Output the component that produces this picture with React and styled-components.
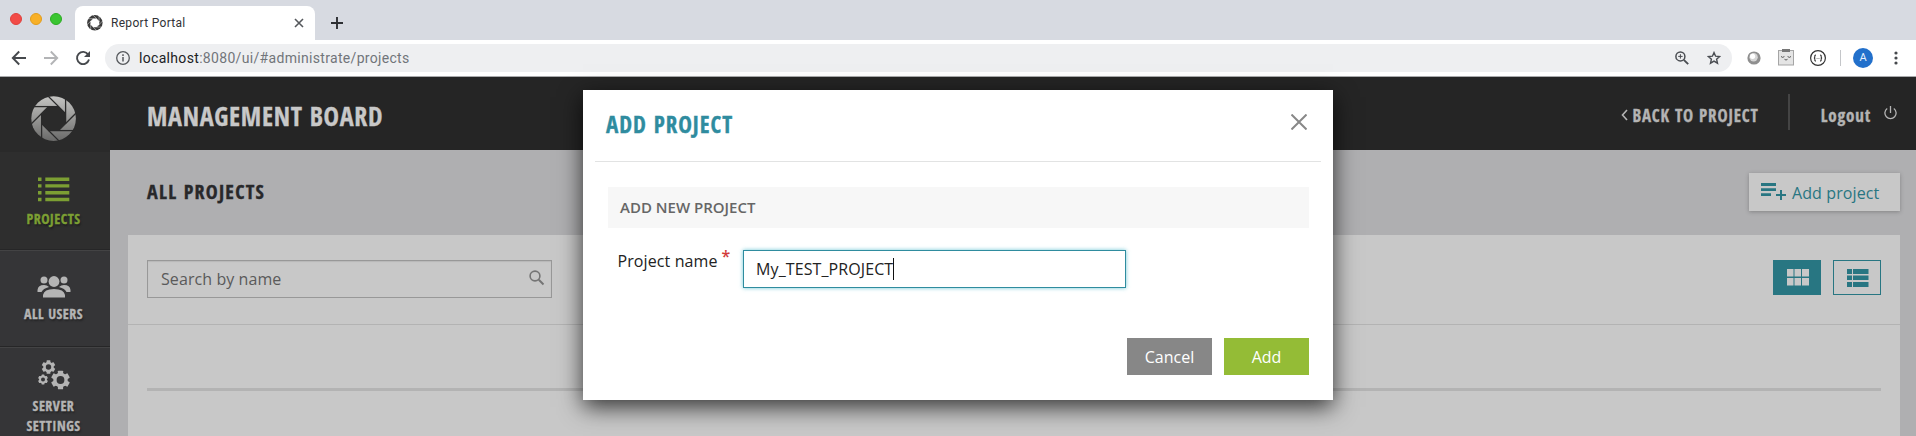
import React from 'react';
import styled, { createGlobalStyle } from 'styled-components';

const Global = createGlobalStyle`
  *, *::before, *::after { box-sizing: border-box; }
  body { margin: 0; overflow: hidden; background: #fff; font-family: "Open Sans", sans-serif; }
  button, input { font: inherit; }
`;

const Screen = styled.div`
  position: relative;
  display: flex;
  flex-direction: column;
  width: 1916px;
  height: 436px;
  overflow: hidden;
`;

const Condensed = styled.span`
  font-family: "Open Sans Condensed", "Open Sans", sans-serif;
  font-stretch: 75%;
  font-weight: 700;
  white-space: nowrap;
  font-size: ${(p) => p.$size}px;
  letter-spacing: ${(p) => p.$ls || 0}px;
  line-height: 1.36;
  -webkit-text-stroke: 0.35px currentColor;
`;

/* Browser chrome */
const TabStrip = styled.div`
  display: flex;
  height: 40px;
  background: #d7dae1;
`;
const Lights = styled.div`
  display: flex;
  gap: 8px;
  width: 75px;
  padding: 13px 0 0 10px;
`;
const Light = styled.i`
  width: 12px;
  height: 12px;
  border-radius: 50%;
  background: ${(p) => p.$fill};
  border: 1px solid ${(p) => p.$edge};
`;
const Tab = styled.div`
  display: flex;
  align-items: center;
  width: 240px;
  height: 34px;
  margin-top: 6px;
  padding: 0 11px 0 12px;
  background: #fff;
  border-radius: 8px 8px 0 0;
  font: 12px/16px Roboto, sans-serif;
  letter-spacing: 0.3px;
  color: #303236;
`;
const TabTitle = styled.span`
  flex: 1;
  margin-left: 8px;
`;
const NewTab = styled.svg`
  margin: 17px 0 0 16px;
`;
const Toolbar = styled.div`
  display: flex;
  align-items: center;
  height: 37px;
  padding: 0 16px 1px 11px;
  background: #fff;
  border-bottom: 1px solid #a9aaac;
`;
const NavIcons = styled.div`
  display: flex;
  gap: 16px;
  width: 94px;
`;
const Address = styled.div`
  display: flex;
  align-items: center;
  width: 1627px;
  height: 28px;
  padding: 0 11px 0 11px;
  border-radius: 14px;
  background: #eeeff1;
  font: 14px/20px Roboto, sans-serif;
  letter-spacing: 0.32px;
  color: #71757a;
`;
const Url = styled.span`
  flex: 1;
  margin-left: 9px;
  b { font-weight: 400; color: #202124; }
`;
const AddressIcons = styled.div`
  display: flex;
  gap: 18px;
`;
const Extensions = styled.div`
  display: flex;
  align-items: center;
  flex: 1;
  gap: 16px;
  padding-left: 15px;
`;
const Divider = styled.i`
  width: 1px;
  height: 16px;
  margin: 0 -4px 0 -2px;
  background: #c4c6c9;
`;
const Avatar = styled.span`
  width: 20px;
  height: 20px;
  margin-right: 5px;
  border-radius: 50%;
  background: #2270cb;
  color: #e8f0fb;
  font: 11px/20px Roboto, sans-serif;
  text-align: center;
`;

/* Application */
const Page = styled.div`
  display: flex;
  flex: 1;
  min-height: 0;
`;
const Sidebar = styled.nav`
  display: flex;
  flex-direction: column;
  width: 110px;
  background: #353537;
`;
const LogoBox = styled.div`
  display: flex;
  flex-shrink: 0;
  justify-content: center;
  height: 75px;
  padding: 19px 3px 0 0;
  background: #2a2a2a;
`;
const NavItem = styled.a`
  display: flex;
  flex-direction: column;
  align-items: center;
  height: ${(p) => p.$h}px;
  padding: ${(p) => p.$top}px 3px 0 0;
  flex-shrink: 0;
  background: ${(p) => (p.$active ? '#2e2e2e' : '#353537')};
  color: ${(p) => (p.$active ? '#7c9f33' : '#b4b4b4')};
  border-bottom: 1px solid #262627;
  box-shadow: inset 0 1px 0 ${(p) => (p.$active ? '#2e2e2e' : '#434344')};
  text-shadow: 1px 2px 2px rgba(0, 0, 0, 0.35);
  text-align: center;
`;
const NavText = styled(Condensed)`
  margin-top: ${(p) => p.$gap}px;
  line-height: 20px;
`;
const Main = styled.main`
  display: flex;
  flex-direction: column;
  flex: 1;
  background: #afafb1;
`;
const Header = styled.header`
  display: flex;
  align-items: center;
  height: 73px;
  padding: 3px 19px 0 37px;
  background: #252525;
  color: #c8c8c8;
`;
const BoardTitle = styled(Condensed)`
  padding-top: 3px;
`;
const Grow = styled.div`
  flex: 1;
`;
const HeaderLine = styled.i`
  width: 2px;
  height: 36px;
  margin: -6px 31px 0 29px;
  background: #444;
`;
const HeaderLink = styled.a`
  display: flex;
  align-items: center;
  gap: ${(p) => p.$gap}px;
  padding-top: 1px;
  color: #b4b4b4;
`;
const PowerIcon = styled.svg`
  margin-top: -5px;
`;
const TitleRow = styled.div`
  display: flex;
  justify-content: space-between;
  align-items: center;
  height: 85px;
  padding: 0 16px 1px 37px;
  color: #28282a;
`;
const AddProject = styled.button`
  display: flex;
  width: 151px;
  height: 38px;
  padding: 10px 0 0 12px;
  gap: 6px;
  border: 0;
  background: #c8c8c8;
  box-shadow: 0 1px 4px rgba(0, 0, 0, 0.25);
  color: #287682;
  font-size: 16px;
  letter-spacing: 0.1px;
  line-height: 20px;
`;
const Panel = styled.section`
  flex: 1;
  margin: 0 16px 0 18px;
  background: #c8c8c8;
`;
const Filters = styled.div`
  display: flex;
  align-items: flex-start;
  height: 90px;
  padding: 25px 19px 0;
  border-bottom: 1px solid #b3b3b3;
`;
const Search = styled.div`
  display: flex;
  justify-content: space-between;
  width: 405px;
  height: 38px;
  padding: 8px 6px 0 13px;
  border: 1px solid #989898;
  box-shadow: inset 0 1px 1px rgba(0, 0, 0, 0.08);
  color: #5a5a5a;
  font-size: 16px;
  letter-spacing: 0.08px;
  line-height: 20px;
`;
const Toggle = styled.button`
  display: flex;
  width: 48px;
  height: 35px;
  margin-left: ${(p) => (p.$on ? 0 : 12)}px;
  padding: 8px 0 0 13px;
  border: 1px solid #287682;
  background: ${(p) => (p.$on ? '#287682' : 'transparent')};
  color: ${(p) => (p.$on ? '#c8c8c8' : '#287682')};
`;
const Rule = styled.div`
  height: 3px;
  margin: 63px 19px 0;
  background: #b3b3b3;
`;

/* Dialog */
const Dialog = styled.div`
  position: absolute;
  left: 583px;
  top: 90px;
  width: 749.5px;
  height: 310px;
  padding: 0 12px;
  background: #fff;
  box-shadow: 0 7px 22px rgba(0, 0, 0, 0.75);
  color: #222;
  font-size: 16px;
`;
const DialogHead = styled.div`
  display: flex;
  justify-content: space-between;
  align-items: flex-start;
  height: 72px;
  padding: 19px 14px 0 11px;
  border-bottom: 1px solid #e2e3e3;
  color: #2f8c9f;
`;
const CloseIcon = styled.svg`
  margin-top: 5px;
`;
const Band = styled.div`
  height: 41px;
  margin: 25px 12px 0 13px;
  padding-left: 12px;
  background: #f7f7f7;
  color: #666;
  font-size: 15px;
  font-weight: 600;
  line-height: 40px;
`;
const Field = styled.label`
  display: flex;
  margin: 22px 0 0 22.5px;
  letter-spacing: 0.1px;
  line-height: 22px;
`;
const Star = styled.sup`
  width: 21.5px;
  margin: -5px 0 0 4px;
  color: #d23b3b;
  font-size: 16px;
  font-weight: 600;
  line-height: 22px;
`;
const Input = styled.div`
  display: flex;
  align-items: center;
  width: 383px;
  height: 38px;
  padding-left: 12px;
  border: 1px solid #2f8c9f;
  box-shadow: 0 0 4px rgba(60, 180, 200, 0.75);
`;
const Caret = styled.i`
  width: 1px;
  height: 22px;
  background: #111;
`;
const Actions = styled.div`
  display: flex;
  justify-content: flex-end;
  gap: 12px;
  margin: 50px 11.5px 0 0;
`;
const Button = styled.button`
  width: 85px;
  height: 37px;
  padding: 1px 0 0;
  border: 0;
  background: ${(p) => p.$bg};
  color: #fff;
  font-size: 16px;
  font-weight: 500;
`;

const blades = [0, 1, 2, 3, 4, 5, 6, 7];
const Aperture = ({ size, from, to, gap, id }) => (
  <svg width={size} height={size} viewBox="0 0 46 46">
    <defs>
      <linearGradient id={id} x1="0" y1="0" x2="0" y2="1">
        <stop offset="0" stopColor={from} />
        <stop offset="1" stopColor={to} />
      </linearGradient>
    </defs>
    <circle cx="22.6" cy="22.6" r="22.3" fill={`url(#${id})`} />
    <g transform="translate(-.4 -.4)">
      <path d="M18.030 11H27.970L35 18.030V27.970L27.970 35H18.030L11 27.970V18.030Z" fill={gap} />
      <g stroke={gap} strokeWidth="1.3">
        {blades.map((i) => (
          <path key={i} d="M28 11H3.500" transform={`rotate(${i * 45} 23 23)`} />
        ))}
      </g>
    </g>
  </svg>
);

const Gear = ({ cx, cy, r, hole }) => (
  <g>
    {[0, 60, 120].map((a) => (
      <rect key={a} x={cx - r * 0.28} y={cy - r} width={r * 0.56} height={r * 2} rx="0.6" transform={`rotate(${a} ${cx} ${cy})`} fill="currentColor" />
    ))}
    <circle cx={cx} cy={cy} r={r * 0.78} fill="currentColor" />
    <circle cx={cx} cy={cy} r={hole} fill="#353537" />
  </g>
);

export default function App() {
  return (
    <Screen>
      <Global />
      <TabStrip>
        <Lights>
          <Light $fill="#f24b47" $edge="#e0403c" />
          <Light $fill="#f8b027" $edge="#e29d1c" />
          <Light $fill="#3ac531" $edge="#2bac22" />
        </Lights>
        <Tab>
          <Aperture size={16} from="#3a3a3a" to="#3a3a3a" gap="#fff" id="tabLogo" />
          <TabTitle>Report Portal</TabTitle>
          <svg width="10" height="10" viewBox="0 0 10 10" stroke="#55585c" strokeWidth="1.6"><path d="M1 1 9 9M9 1 1 9" /></svg>
        </Tab>
        <NewTab width="12" height="12" viewBox="0 0 12 12" stroke="#2d2f33" strokeWidth="1.9"><path d="M6 0V12M0 6H12" /></NewTab>
      </TabStrip>
      <Toolbar>
        <NavIcons>
          <svg width="16" height="16" viewBox="0 0 16 16" fill="none" stroke="#46494d" strokeWidth="1.9"><path d="M15 8H2.2M8.2 1.5 1.8 8 8.2 14.5" /></svg>
          <svg width="16" height="16" viewBox="0 0 16 16" fill="none" stroke="#b3b4b6" strokeWidth="1.9"><path d="M1 8H13.8M7.8 1.5 14.2 8 7.8 14.5" /></svg>
          <svg width="16" height="16" viewBox="0 0 16 16"><path d="M13.2 4.6A6.1 6.1 0 1 0 14 9.6" fill="none" stroke="#46494d" strokeWidth="1.9" /><path d="M15 1V7H9Z" fill="#46494d" /></svg>
        </NavIcons>
        <Address>
          <svg width="14" height="14" viewBox="0 0 14 14" fill="none" stroke="#55585c"><circle cx="7" cy="7" r="6.3" strokeWidth="1.3" /><path d="M7 6V10.6M7 3.3V4.9" strokeWidth="1.5" /></svg>
          <Url><b>localhost</b>:8080/ui/#administrate/projects</Url>
          <AddressIcons>
            <svg width="14" height="14" viewBox="0 0 14 14" fill="none" stroke="#4a4d52" strokeWidth="1.5"><circle cx="5.4" cy="5.4" r="4.5" /><path d="M8.8 8.8 13.2 13.2" strokeWidth="1.9" /><path d="M5.4 3.2V7.6M3.2 5.4H7.6" strokeWidth="1" /></svg>
            <svg width="14" height="14" viewBox="0 0 14 14" fill="none" stroke="#4a4d52" strokeWidth="1.4"><path d="M7 1.6 8.6 5.2 12.6 5.6 9.6 8.2 10.5 12.2 7 10.1 3.5 12.2 4.4 8.2 1.4 5.6 5.4 5.2Z" /></svg>
          </AddressIcons>
        </Address>
        <Extensions>
          <svg width="14" height="14" viewBox="0 0 14 14"><circle cx="7" cy="7" r="6.6" fill="#8f8f8f" /><circle cx="6.6" cy="6.3" r="4.2" fill="#d5d5d5" /><circle cx="5.6" cy="5.3" r="2.6" fill="#fff" /></svg>
          <svg width="17" height="17" viewBox="-1 0 17 17"><rect x="0.5" y="1.5" width="15" height="14.5" fill="#e4e4e4" stroke="#a5a5a5" /><path d="M4 0H12V3H4Z" fill="#777" /><path d="M3 7.500Q4.700 9.300 6.400 7.500M9.600 7.500Q11.300 9.300 13 7.500M6.500 10.300Q8 11.800 9.500 10.300" fill="none" stroke="#555" /></svg>
          <svg width="16" height="16" viewBox="0 0 16 16" fill="none" stroke="#333"><circle cx="8" cy="8" r="7.4" strokeWidth="1.2" /><path d="M6 5Q4.600 5 4.800 6.600 4.900 8 3.900 8 4.900 8 4.800 9.400 4.600 11 6 11M10 5Q11.400 5 11.200 6.600 11.100 8 12.100 8 11.100 8 11.200 9.400 11.400 11 10 11" strokeWidth="1.100" /><path d="M6.300 8.500H9.800" stroke="#999" strokeWidth=".7" /></svg>
          <Divider />
          <Avatar>A</Avatar>
          <svg width="4" height="14" viewBox="0 0 4 14" fill="#46494d"><circle cx="2" cy="2" r="1.6" /><circle cx="2" cy="7" r="1.6" /><circle cx="2" cy="12" r="1.6" /></svg>
        </Extensions>
      </Toolbar>
      <Page>
        <Sidebar>
          <LogoBox><Aperture size={46} from="#c4c4c2" to="#6a6a69" gap="#2a2a2a" id="mainLogo" /></LogoBox>
          <NavItem $active $h={98} $top={25}>
            <svg width="32" height="26" viewBox="0 0 32 26" fill="currentColor">
              {[0.6, 7.2, 14, 20.8].map((y) => <path key={y} d={`M0 ${y}h3.500v3.400H0zM7.300 ${y}h24v3.400h-24z`} />)}
            </svg>
            <NavText $size={14} $ls={0.5} $gap={6}>PROJECTS</NavText>
          </NavItem>
          <NavItem $h={97} $top={25}>
            <svg width="34" height="24" viewBox="0 0 34 24" fill="currentColor">
              <circle cx="17" cy="6.500" r="5.400" /><circle cx="7" cy="5" r="3.500" /><circle cx="27" cy="5" r="3.500" />
              <path d="M6 22.500V20Q7 14 17 14T28 20V22.500ZM.5 17V15Q1 10 7 10Q10 10 12 12Q6 13.500 4.500 17ZM33.500 17V15Q33 10 27 10Q24 10 22 12Q28 13.500 29.500 17Z" />
            </svg>
            <NavText $size={14} $ls={0.5} $gap={5}>ALL USERS</NavText>
          </NavItem>
          <NavItem $h={97} $top={13}>
            <svg width="32" height="30" viewBox="0 0 32 30">
              <Gear cx={10.5} cy={7} r={6.8} hole={2.7} />
              <Gear cx={5} cy={19.5} r={5} hole={2} />
              <Gear cx={22.5} cy={20} r={9.3} hole={3.9} />
            </svg>
            <NavText $size={14} $ls={0.5} $gap={6}>SERVER<br />SETTINGS</NavText>
          </NavItem>
        </Sidebar>
        <Main>
          <Header>
            <BoardTitle $size={26} $ls={0.7}>MANAGEMENT BOARD</BoardTitle>
            <Grow />
            <HeaderLink $gap={4}>
              <svg width="7" height="12" viewBox="0 0 7 12" fill="none" stroke="currentColor" strokeWidth="1.6"><path d="M6 1 1.500 6 6 11" /></svg>
              <Condensed $size={17} $ls={0.85}>BACK TO PROJECT</Condensed>
            </HeaderLink>
            <HeaderLine />
            <HeaderLink $gap={13}>
              <Condensed $size={17} $ls={0.8}>Logout</Condensed>
              <PowerIcon width="13" height="14" viewBox="0 0 13 14" fill="none" stroke="currentColor" strokeWidth="1.300"><path d="M6.500 0V7M3.200 2.500A5.600 5.600 0 1 0 9.800 2.500" /></PowerIcon>
            </HeaderLink>
          </Header>
          <TitleRow>
            <Condensed $size={20} $ls={1.25}>ALL PROJECTS</Condensed>
            <AddProject>
              <svg width="25" height="18" viewBox="0 0 25 18" fill="currentColor"><path d="M0 0h15v3H0zM0 5.200h15v2.800H0zM0 10.300h10v2.700H0zM15 11h4V7h2v4h4v2h-4v4h-2v-4h-4z" /></svg>
              Add project
            </AddProject>
          </TitleRow>
          <Panel>
            <Filters>
              <Search>
                Search by name
                <svg width="16" height="17" viewBox="0 0 16 17" fill="none" stroke="#757575" strokeWidth="1.600"><circle cx="6" cy="7" r="4.900" /><path d="M9.800 10.700 14.500 15.500" strokeWidth="2" /></svg>
              </Search>
              <Grow />
              <Toggle $on>
                <svg width="22" height="17" viewBox="0 0 22 17" fill="currentColor"><path d="M0 0h6.500v7.500H0zM7.500 0H14v7.500H7.500zM15 0h7v7.500h-7zM0 9h6.500v7.500H0zM7.500 9H14v7.500H7.500zM15 9h7v7.500h-7z" /></svg>
              </Toggle>
              <Toggle>
                <svg width="22" height="18" viewBox="0 0 22 18" fill="currentColor"><path d="M0 0h5v5H0zM6 0h15.500v5H6zM0 6.500h5V11H0zM6 6.500h15.500V11H6zM0 13h5v5H0zM6 13h15.500v5H6z" /></svg>
              </Toggle>
            </Filters>
            <Rule />
          </Panel>
        </Main>
      </Page>
      <Dialog>
        <DialogHead>
          <Condensed $size={23} $ls={1}>ADD PROJECT</Condensed>
          <CloseIcon width="16" height="16" viewBox="0 0 16 16" stroke="#888" strokeWidth="2"><path d="M.5 .5 15.500 15.500M15.500 .5 .5 15.500" /></CloseIcon>
        </DialogHead>
        <Band>ADD NEW PROJECT</Band>
        <Field>
          Project name
          <Star>*</Star>
          <Input>My_TEST_PROJECT<Caret /></Input>
        </Field>
        <Actions>
          <Button $bg="#878787">Cancel</Button>
          <Button $bg="#94bc36">Add</Button>
        </Actions>
      </Dialog>
    </Screen>
  );
}
